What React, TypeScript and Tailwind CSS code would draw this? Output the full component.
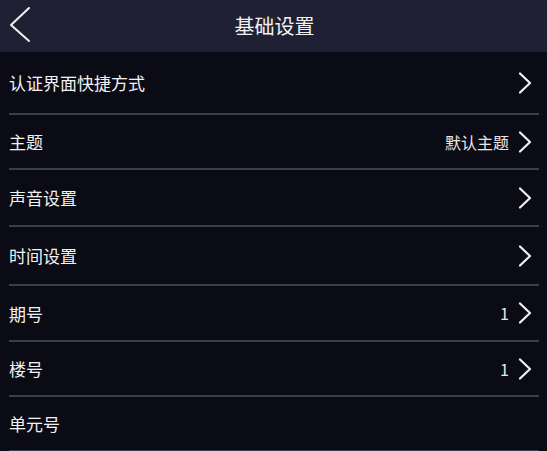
import React from "react";

const Chevron = () => (
  <svg width="14" height="22" viewBox="0 0 14 22" className="block">
    <polyline points="2,1.5 12,11 2,20.5" fill="none" stroke="#f2f2f2" strokeWidth="2.2" strokeLinecap="round" strokeLinejoin="round" />
  </svg>
);

type Row = { label: string; value?: string; arrow: boolean; h: string };

const rows: Row[] = [
  { label: "认证界面快捷方式", arrow: true, h: "h-[61px]" },
  { label: "主题", value: "默认主题", arrow: true, h: "h-[53px]" },
  { label: "声音设置", arrow: true, h: "h-[55px]" },
  { label: "时间设置", arrow: true, h: "h-[57px]" },
  { label: "期号", value: "1", arrow: true, h: "h-[54px]" },
  { label: "楼号", value: "1", arrow: true, h: "h-[53px]" },
  { label: "单元号", arrow: false, h: "h-[53px]" },
];

export default function App() {
  return (
    <div
      className="w-[547px] h-[451px] overflow-hidden bg-[#0b0b15] text-[#f2f2f2]"
      style={{ fontFamily: '"Noto Sans CJK SC", "Noto Sans", sans-serif' }}
    >
      <div className="relative h-[52px] bg-[#1f2033] flex items-center justify-center">
        <svg width="24" height="38" viewBox="0 0 24 38" className="absolute left-[8px] top-[6px]">
          <polyline points="21,2 3,19 21,35" fill="none" stroke="#f2f2f2" strokeWidth="2" strokeLinecap="round" strokeLinejoin="round" />
        </svg>
        <span className="text-[20px] leading-none pl-[2px]">基础设置</span>
      </div>
      <div className="flex flex-col">
        {rows.map((r, i) => (
          <div key={i} className="flex flex-col">
            <div className={`${r.h} flex items-center pl-[9px] pr-[15px]`}>
              <span className="text-[17px] leading-none flex-1">{r.label}</span>
              {r.value && (
                <span className="text-[16px] leading-none mr-[9px] text-[#e8e8e8]">{r.value}</span>
              )}
              {r.arrow && <Chevron />}
            </div>
            <div className="ml-[9px] mr-[8px] h-[2px] bg-[#3b3d48]" />
          </div>
        ))}
      </div>
    </div>
  );
}
